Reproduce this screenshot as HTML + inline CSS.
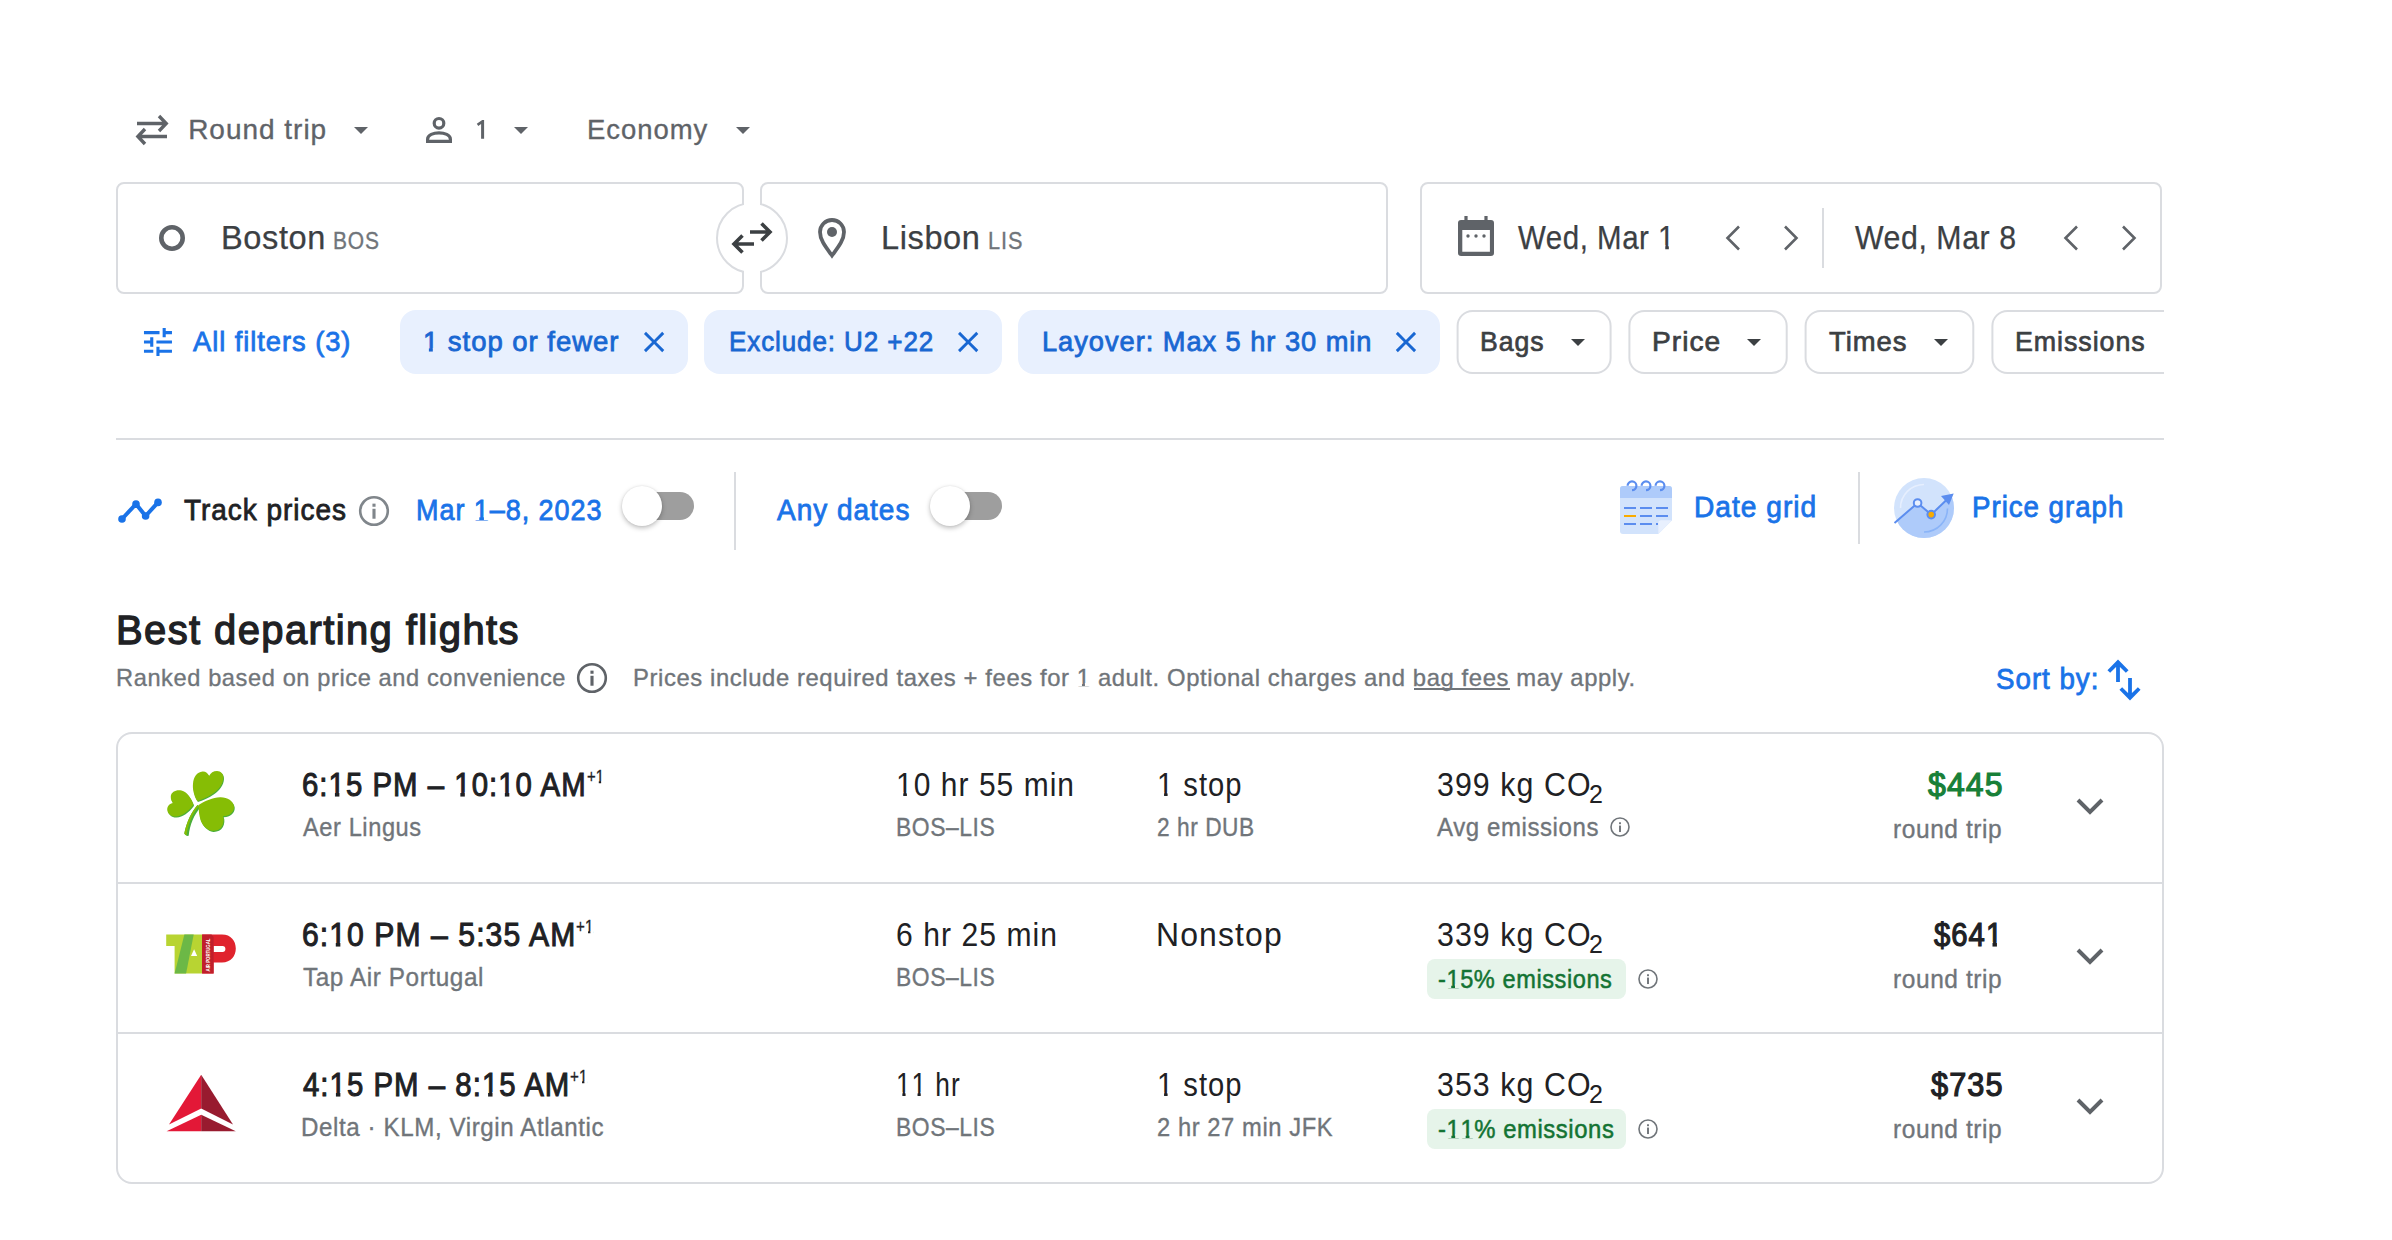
<!DOCTYPE html>
<html><head><meta charset="utf-8"><title>Google Flights</title>
<style>
html,body{margin:0;padding:0;background:#fff;}
body{width:2392px;height:1240px;position:relative;overflow:hidden;font-family:"Liberation Sans",sans-serif;}
.t{position:absolute;white-space:nowrap;transform-origin:0 0;}
.one{position:relative;}
.one::before,.one::after{content:"";position:absolute;top:0.79em;height:0.14em;background:var(--bg);}
.one::before{left:0;width:var(--a);}
.one::after{left:var(--b);width:0.225em;}
svg.ov{position:absolute;left:0;top:0;}
@media (max-width:1300px){html{zoom:0.5;}}
.tog{position:absolute;}
.tog .tr{position:absolute;left:10px;top:6px;width:62px;height:28px;border-radius:14px;background:#9e9e9e;}
.tog .th{position:absolute;left:0;top:0;width:40px;height:40px;border-radius:50%;background:#fff;box-shadow:0 2px 5px rgba(0,0,0,.26),0 0 2px rgba(0,0,0,.08);}
</style></head>
<body>
<svg class="ov" width="2392" height="1240" viewBox="0 0 2392 1240">
<g stroke="#5f6368" stroke-width="3.4" fill="none"><path d="M137 123.5H165M159 116L166.2 123.5L159 131"/><path d="M138.5 136.5H167M145 129L137.9 136.5L145 144"/></g>
<path d="M481.1 119.9H484.1V138.8H481.1V123.9L478.3 125.9L476.8 123.8L482.2 119.9Z" fill="#5f6368"/>
<path d="M354 127H368L361 134Z" fill="#5f6368"/>
<path d="M514 127H528L521 134Z" fill="#5f6368"/>
<path d="M736 127H750L743 134Z" fill="#5f6368"/>
<g stroke="#5f6368" stroke-width="3.2" fill="none"><circle cx="439" cy="123.3" r="4.8"/><path d="M427.6 141.4V139.2C427.6 135 433.5 132.8 439 132.8C444.5 132.8 450.4 135 450.4 139.2V141.4Z"/></g>
<rect x="117" y="183" width="626" height="110" rx="7" fill="#fff" stroke="#dadce0" stroke-width="2"/>
<rect x="761" y="183" width="626" height="110" rx="7" fill="#fff" stroke="#dadce0" stroke-width="2"/>
<circle cx="752" cy="238" r="35" fill="#fff" stroke="#dadce0" stroke-width="2"/>
<rect x="744" y="195" width="16" height="14" fill="#fff"/><rect x="744" y="267" width="16" height="14" fill="#fff"/>
<g stroke="#3c4043" stroke-width="3.6" fill="none"><path d="M750 232H770M761.5 223.5L770 232L761.5 240.5"/><path d="M734 244H754M742.5 235.5L734 244L742.5 252.5"/></g>
<circle cx="172" cy="238" r="10.7" fill="none" stroke="#5f6368" stroke-width="4.6"/>
<path d="M832 255.5C826.5 248 820 240.5 820 232A12 12 0 0 1 844 232C844 240.5 837.5 248 832 255.5Z" fill="none" stroke="#5f6368" stroke-width="3.8"/><circle cx="832" cy="232" r="5" fill="#5f6368"/>
<rect x="1421" y="183" width="740" height="110" rx="7" fill="#fff" stroke="#dadce0" stroke-width="2"/>
<path d="M1461 220H1491A3 3 0 0 1 1494 223V253A3 3 0 0 1 1491 256H1461A3 3 0 0 1 1458 253V223A3 3 0 0 1 1461 220ZM1462.3 230V251.8H1489.9V230Z" fill="#5f6368" fill-rule="evenodd"/><rect x="1464.4" y="216" width="3.2" height="5" fill="#5f6368"/><rect x="1484.4" y="216" width="3.2" height="5" fill="#5f6368"/>
<circle cx="1468" cy="236" r="1.7" fill="#5f6368"/>
<circle cx="1476" cy="236" r="1.7" fill="#5f6368"/>
<circle cx="1484" cy="236" r="1.7" fill="#5f6368"/>
<g stroke="#5f6368" stroke-width="2.6" fill="none"><path d="M1739 226.5L1727.5 238L1739 249.5"/><path d="M1785 226.5L1796.5 238L1785 249.5"/><path d="M2077 226.5L2065.5 238L2077 249.5"/><path d="M2123 226.5L2134.5 238L2123 249.5"/></g>
<rect x="1822" y="208" width="2" height="60" fill="#dadce0"/>
<g fill="#1a73e8" transform="translate(139.3 323.3) scale(1.5556)"><path d="M3 17v2h6v-2H3zM3 5v2h10V5H3zm10 16v-2h8v-2h-8v-2h-2v6h2zM7 9v2H3v2h4v2h2V9H7zm14 4v-2H11v2h10zm-6-4h2V7h4V5h-4V3h-2v6z"/></g>
<rect x="400" y="310" width="288" height="64" rx="16" fill="#e8f0fe"/>
<path d="M19 6.41L17.59 5L12 10.59L6.41 5L5 6.41L10.59 12L5 17.59L6.41 19L12 13.41L17.59 19L19 17.59L13.41 12Z" fill="#1967d2" transform="translate(636.70 324.60) scale(1.45)"/>
<rect x="704" y="310" width="298" height="64" rx="16" fill="#e8f0fe"/>
<path d="M19 6.41L17.59 5L12 10.59L6.41 5L5 6.41L10.59 12L5 17.59L6.41 19L12 13.41L17.59 19L19 17.59L13.41 12Z" fill="#1967d2" transform="translate(950.75 324.60) scale(1.45)"/>
<rect x="1018" y="310" width="422" height="64" rx="16" fill="#e8f0fe"/>
<path d="M19 6.41L17.59 5L12 10.59L6.41 5L5 6.41L10.59 12L5 17.59L6.41 19L12 13.41L17.59 19L19 17.59L13.41 12Z" fill="#1967d2" transform="translate(1388.55 324.60) scale(1.45)"/>
<defs><clipPath id="cl"><rect x="0" y="0" width="2164" height="1240"/></clipPath></defs>
<g clip-path="url(#cl)">
<rect x="1457.6" y="311" width="153.0" height="62" rx="15" fill="#fff" stroke="#dadce0" stroke-width="2"/>
<path d="M1571 339H1585L1578 346Z" fill="#3c4043"/>
<rect x="1629.4" y="311" width="157.29999999999995" height="62" rx="15" fill="#fff" stroke="#dadce0" stroke-width="2"/>
<path d="M1747 339H1761L1754 346Z" fill="#3c4043"/>
<rect x="1805.6" y="311" width="167.70000000000005" height="62" rx="15" fill="#fff" stroke="#dadce0" stroke-width="2"/>
<path d="M1934 339H1948L1941 346Z" fill="#3c4043"/>
<rect x="1992.4" y="311" width="226.5999999999999" height="62" rx="15" fill="#fff" stroke="#dadce0" stroke-width="2"/>
</g>
<rect x="116" y="438" width="2048" height="2" fill="#dadce0"/>
<g stroke="#1a73e8" stroke-width="4" fill="none" stroke-linejoin="round"><path d="M122 519L136 504L145.6 516L158 502.4"/></g>
<circle cx="122" cy="519" r="3.8" fill="#1a73e8"/>
<circle cx="136" cy="504" r="3.8" fill="#1a73e8"/>
<circle cx="145.6" cy="516" r="3.8" fill="#1a73e8"/>
<circle cx="158" cy="502.4" r="3.8" fill="#1a73e8"/>
<circle cx="374" cy="511" r="13.8" fill="none" stroke="#80868b" stroke-width="2.6"/>
<rect x="372.44" y="508.79" width="3.12" height="9.94" fill="#80868b"/><rect x="372.44" y="503.64" width="3.12" height="3.12" fill="#80868b"/>
<rect x="734" y="472" width="2" height="78" fill="#dadce0"/>
<rect x="1858" y="472" width="2" height="72" fill="#dadce0"/>
<g><path d="M1623 486H1669A3 3 0 0 1 1672 489V520.3L1658.3 534H1623A3 3 0 0 1 1620 531V489A3 3 0 0 1 1623 486Z" fill="#d2e3fc"/><path d="M1623 486H1669A3 3 0 0 1 1672 489V498H1620V489A3 3 0 0 1 1623 486Z" fill="#aecbfa"/><path d="M1672 520.3L1658.3 534V523.3A3 3 0 0 1 1661.3 520.3Z" fill="#e8f0fe"/><g stroke="#5b8def" stroke-width="2" fill="none"><path d="M1624 508H1636M1640 508H1652M1656 508H1668M1640 516H1652M1656 516H1668M1624 524H1636M1640 524H1652M1656 524H1658"/><path d="M1627.6 485.8A4.4 4.4 0 1 1 1632 490.2M1641.6 485.8A4.4 4.4 0 1 1 1646 490.2M1655.6 485.8A4.4 4.4 0 1 1 1660 490.2" stroke-width="2.2"/></g><path d="M1624 516H1636" stroke="#f9ab00" stroke-width="2"/></g>
<g><clipPath id="pgc"><circle cx="1924" cy="508" r="30"/></clipPath><circle cx="1924" cy="508" r="30" fill="#d2e3fc"/><path d="M1890 526L1917.6 503L1931.2 514.6L1950 497L1960 490V545H1890Z" fill="#aecbfa" clip-path="url(#pgc)"/><path d="M1900.5 508A23.5 23.5 0 0 1 1924 484.5" stroke="#e8f0fe" stroke-width="1.6" fill="none" opacity=".9"/><path d="M1947.5 508.5A23.5 23.5 0 0 1 1924 532" stroke="#8ab4f8" stroke-width="1.6" fill="none"/><path d="M1894.5 523L1917.6 503L1931.2 514.6L1948 498.5" stroke="#5b8def" stroke-width="2" fill="none"/><path d="M1953.7 493.4L1941 496L1949 505Z" fill="#5b8def"/><circle cx="1917.6" cy="503" r="3.8" fill="#e8f0fe" stroke="#5b8def" stroke-width="2"/><circle cx="1931.2" cy="514.6" r="3.8" fill="#f9ab00" stroke="#5b8def" stroke-width="2"/></g>
<circle cx="592" cy="678" r="13.8" fill="none" stroke="#5f6368" stroke-width="2.6"/>
<rect x="590.44" y="675.79" width="3.12" height="9.94" fill="#5f6368"/><rect x="590.44" y="670.64" width="3.12" height="3.12" fill="#5f6368"/>
<g stroke="#1a73e8" stroke-width="3.8" fill="none"><path d="M2118 682V662.5M2108.8 671.5L2118 662.3L2127.2 671.5"/><path d="M2130 678V697.5M2120.8 688.5L2130 697.7L2139.2 688.5"/></g>
<rect x="117" y="733" width="2046" height="450" rx="15" fill="#fff" stroke="#dadce0" stroke-width="2"/>
<rect x="118" y="882" width="2044" height="2" fill="#dadce0"/><rect x="118" y="1032" width="2044" height="2" fill="#dadce0"/>
<path d="M2078 800L2090 812L2102 800" stroke="#5f6368" stroke-width="4" fill="none" transform="translate(0 0)"/>
<path d="M2078 800L2090 812L2102 800" stroke="#5f6368" stroke-width="4" fill="none" transform="translate(0 150)"/>
<path d="M2078 800L2090 812L2102 800" stroke="#5f6368" stroke-width="4" fill="none" transform="translate(0 300)"/>
<circle cx="1620" cy="827" r="9.0" fill="none" stroke="#70757a" stroke-width="1.6"/>
<rect x="1619.04" y="825.56" width="1.92" height="6.48" fill="#70757a"/><rect x="1619.04" y="822.26" width="1.92" height="1.92" fill="#70757a"/>
<rect x="1427" y="959" width="199" height="40" rx="8" fill="#e6f4ea"/>
<circle cx="1648" cy="979" r="9.0" fill="none" stroke="#70757a" stroke-width="1.6"/>
<rect x="1647.04" y="977.56" width="1.92" height="6.48" fill="#70757a"/><rect x="1647.04" y="974.26" width="1.92" height="1.92" fill="#70757a"/>
<rect x="1427" y="1109" width="199" height="40" rx="8" fill="#e6f4ea"/>
<circle cx="1648" cy="1129" r="9.0" fill="none" stroke="#70757a" stroke-width="1.6"/>
<rect x="1647.04" y="1127.56" width="1.92" height="6.48" fill="#70757a"/><rect x="1647.04" y="1124.26" width="1.92" height="1.92" fill="#70757a"/>
<g>
<path d="M197.5 805C191.5 812 186.5 822 184.3 833.5C185.2 835.5 187.2 836.2 188.7 835.8C189.7 825 194.2 814 201 807Z" fill="#4aae3a"/>
<path d="M197.5 805C191.5 812 186.5 822 184.3 833.5C185 834.5 185.8 835.2 186.6 835.5C187.8 825 192 814 198.8 806.2Z" fill="#86bd05"/>
<path d="M197.2 801C193.5 795 192.5 788 193 783.7C193.5 777 197 772.3 202.5 771.6C205.5 771.3 208 773.5 209 775.9C210.5 773 213.5 771 217 771C221 771 223.5 774 223.3 778C223 784 219 789.5 213 793.5C208 797 202 799.8 197.2 801Z" fill="#4aae3a" transform="translate(0.7 1.1)"/>
<path d="M193.2 804C191 798 187 792 181.5 790.6C176 789.5 171.5 792 170.8 796C170.5 799 171.8 801.8 173 803.1C170 803.5 167.2 806 167.2 809.5C167.5 814 171.5 816.8 176 816.5C182 816 188 812 193.2 805Z" fill="#4aae3a" transform="translate(0.7 1.1)"/>
<path d="M198.6 805C205 801 213 797.5 220 797.3C227 797 233.5 801 234 806.5C234.3 811 231 815 225.5 816L223 816.1C224.2 818.5 223.8 823 222.2 826C220.2 829.5 216.5 831 212.5 830.8C207 830.3 202.5 825.5 200.5 820C199 815 198.6 809 198.6 805Z" fill="#4aae3a" transform="translate(0.7 1.1)"/>
<path d="M197.2 801C193.5 795 192.5 788 193 783.7C193.5 777 197 772.3 202.5 771.6C205.5 771.3 208 773.5 209 775.9C210.5 773 213.5 771 217 771C221 771 223.5 774 223.3 778C223 784 219 789.5 213 793.5C208 797 202 799.8 197.2 801Z" fill="#86bd05"/>
<path d="M193.2 804C191 798 187 792 181.5 790.6C176 789.5 171.5 792 170.8 796C170.5 799 171.8 801.8 173 803.1C170 803.5 167.2 806 167.2 809.5C167.5 814 171.5 816.8 176 816.5C182 816 188 812 193.2 805Z" fill="#86bd05"/>
<path d="M198.6 805C205 801 213 797.5 220 797.3C227 797 233.5 801 234 806.5C234.3 811 231 815 225.5 816L223 816.1C224.2 818.5 223.8 823 222.2 826C220.2 829.5 216.5 831 212.5 830.8C207 830.3 202.5 825.5 200.5 820C199 815 198.6 809 198.6 805Z" fill="#86bd05"/>
</g>
<g><path d="M166.2 934.6H202.1V973.6H174.6V946.1H166.2Z" fill="#b8d432"/><path d="M184.4 934.6H193.7L186.1 973.6H174.6Z" fill="#6cb846"/><path d="M194.1 949.2L197.2 955.9H191Z" fill="#fff"/><path d="M202.1 934.6H222C231 934.6 235.8 941 235.8 948.6C235.8 956 231 962.6 222 962.6H213.6V973.6H202.1Z M213.6 946.1V951.9H222.5A2.9 2.9 0 0 0 222.5 946.1Z" fill="#e0232d" fill-rule="evenodd"/><path d="M202.1 934.6H211.5L213.6 937V973.6H202.1Z" fill="#c01f2b"/><text transform="translate(209.6 971.5) rotate(-90)" font-size="4.6" fill="#fff" font-family="Liberation Sans" font-weight="bold" textLength="33" lengthAdjust="spacingAndGlyphs">AIR PORTUGAL</text></g>
<g><path d="M201.2 1074.8L169 1124.5L201.2 1108.5Z" fill="#e31837"/><path d="M201.2 1074.8L233 1124.5L201.2 1108.5Z" fill="#981b2f"/><path d="M201.2 1114.8L166.6 1131.2H201.2Z" fill="#e31837"/><path d="M201.2 1114.8L235.8 1131.2H201.2Z" fill="#981b2f"/></g>
</svg>
<div class="tog" style="left:622px;top:486px;"><div class="tr"></div><div class="th"></div></div>
<div class="tog" style="left:930px;top:486px;"><div class="tr"></div><div class="th"></div></div>
<span class="t" style="left:188.18px;top:115.50px;font-size:28px;line-height:28px;color:#5f6368;letter-spacing:0.98px;-webkit-text-stroke:0.35px #5f6368;">Round trip</span>
<span class="t" style="left:587.21px;top:115.50px;font-size:28px;line-height:28px;color:#5f6368;transform:scaleX(0.9816);letter-spacing:0.98px;-webkit-text-stroke:0.35px #5f6368;">Economy</span>
<span class="t" style="left:221.16px;top:221.00px;font-size:33px;line-height:33px;color:#3c4043;transform:scaleX(0.9875);letter-spacing:0.6px;-webkit-text-stroke:0.25px #3c4043;">Boston</span>
<span class="t" style="left:333.43px;top:228.50px;font-size:24px;line-height:24px;color:#70757a;transform:scaleX(0.8730);letter-spacing:1.0px;-webkit-text-stroke:0.35px #70757a;">BOS</span>
<span class="t" style="left:881.16px;top:221.00px;font-size:33px;line-height:33px;color:#3c4043;transform:scaleX(0.9868);letter-spacing:0.6px;-webkit-text-stroke:0.25px #3c4043;">Lisbon</span>
<span class="t" style="left:988.37px;top:228.50px;font-size:24px;line-height:24px;color:#70757a;transform:scaleX(0.9043);letter-spacing:1.0px;-webkit-text-stroke:0.35px #70757a;">LIS</span>
<span class="t" style="left:1517.62px;top:221.00px;font-size:33px;line-height:33px;color:#3c4043;transform:scaleX(0.8925);letter-spacing:0.6px;-webkit-text-stroke:0.25px #3c4043;">Wed, Mar <span class="one" style="--bg:#fff;--a:0.228em;--b:0.356em">1</span></span>
<span class="t" style="left:1855.12px;top:221.00px;font-size:33px;line-height:33px;color:#3c4043;transform:scaleX(0.9183);letter-spacing:0.6px;-webkit-text-stroke:0.25px #3c4043;">Wed, Mar 8</span>
<span class="t" style="left:193.40px;top:327.50px;font-size:28px;line-height:28px;color:#1a73e8;transform:scaleX(0.9748);letter-spacing:0.98px;-webkit-text-stroke:0.8px #1a73e8;">All filters (3)</span>
<span class="t" style="left:423.44px;top:327.50px;font-size:28px;line-height:28px;color:#1967d2;transform:scaleX(0.9821);letter-spacing:0.98px;-webkit-text-stroke:0.8px #1967d2;"><span class="one" style="--bg:#e8f0fe;--a:0.218em;--b:0.366em">1</span> stop or fewer</span>
<span class="t" style="left:728.54px;top:327.50px;font-size:28px;line-height:28px;color:#1967d2;transform:scaleX(0.9284);letter-spacing:0.98px;-webkit-text-stroke:0.8px #1967d2;">Exclude: U2 +22</span>
<span class="t" style="left:1041.95px;top:327.50px;font-size:28px;line-height:28px;color:#1967d2;transform:scaleX(0.9736);letter-spacing:0.98px;-webkit-text-stroke:0.8px #1967d2;">Layover: Max 5 hr 30 min</span>
<span class="t" style="left:1480.45px;top:327.50px;font-size:28px;line-height:28px;color:#3c4043;transform:scaleX(0.9509);letter-spacing:0.98px;-webkit-text-stroke:0.7px #3c4043;">Bags</span>
<span class="t" style="left:1652.34px;top:327.50px;font-size:28px;line-height:28px;color:#3c4043;transform:scaleX(1.0059);letter-spacing:0.98px;-webkit-text-stroke:0.7px #3c4043;">Price</span>
<span class="t" style="left:1829.35px;top:327.50px;font-size:28px;line-height:28px;color:#3c4043;transform:scaleX(0.9792);letter-spacing:0.98px;-webkit-text-stroke:0.7px #3c4043;">Times</span>
<span class="t" style="left:2015.03px;top:327.50px;font-size:28px;line-height:28px;color:#3c4043;transform:scaleX(0.9575);letter-spacing:0.98px;-webkit-text-stroke:0.7px #3c4043;">Emissions</span>
<span class="t" style="left:184.44px;top:495.50px;font-size:29px;line-height:29px;color:#202124;transform:scaleX(0.9638);letter-spacing:1.02px;-webkit-text-stroke:0.8px #202124;">Track prices</span>
<span class="t" style="left:415.54px;top:495.50px;font-size:29px;line-height:29px;color:#1a73e8;transform:scaleX(0.9305);letter-spacing:1.02px;-webkit-text-stroke:0.8px #1a73e8;">Mar <span class="one" style="--bg:#fff;--a:0.218em;--b:0.366em">1</span>–8, 2023</span>
<span class="t" style="left:776.80px;top:495.50px;font-size:29px;line-height:29px;color:#1a73e8;transform:scaleX(0.9658);letter-spacing:1.02px;-webkit-text-stroke:0.8px #1a73e8;">Any dates</span>
<span class="t" style="left:1694.46px;top:492.90px;font-size:29px;line-height:29px;color:#1a73e8;transform:scaleX(0.9709);letter-spacing:1.02px;-webkit-text-stroke:0.8px #1a73e8;">Date grid</span>
<span class="t" style="left:1972.49px;top:492.80px;font-size:29px;line-height:29px;color:#1a73e8;transform:scaleX(0.9546);letter-spacing:1.02px;-webkit-text-stroke:0.8px #1a73e8;">Price graph</span>
<span class="t" style="left:115.73px;top:610.10px;font-size:41px;line-height:41px;color:#202124;transform:scaleX(0.9742);letter-spacing:1.44px;-webkit-text-stroke:1.3px #202124;">Best departing flights</span>
<span class="t" style="left:115.91px;top:665.80px;font-size:24px;line-height:24px;color:#70757a;transform:scaleX(0.9845);letter-spacing:0.6px;-webkit-text-stroke:0.35px #70757a;">Ranked based on price and convenience</span>
<span class="t" style="left:633.19px;top:666.10px;font-size:24px;line-height:24px;color:#70757a;transform:scaleX(0.9933);letter-spacing:0.6px;-webkit-text-stroke:0.35px #70757a;">Prices include required taxes + fees for <span class="one" style="--bg:#fff;--a:0.225em;--b:0.359em">1</span> adult. Optional charges and bag fees may apply.</span>
<span class="t" style="left:1996.44px;top:664.50px;font-size:29px;line-height:29px;color:#1a73e8;transform:scaleX(0.9564);letter-spacing:1.02px;-webkit-text-stroke:0.8px #1a73e8;">Sort by:</span>
<span class="t" style="left:301.72px;top:768.00px;font-size:33px;line-height:33px;color:#202124;transform:scaleX(0.8897);letter-spacing:1.16px;-webkit-text-stroke:1.0px #202124;">6:<span class="one" style="--bg:#fff;--a:0.217em;--b:0.367em">1</span>5 PM – <span class="one" style="--bg:#fff;--a:0.217em;--b:0.367em">1</span>0:<span class="one" style="--bg:#fff;--a:0.217em;--b:0.367em">1</span>0 AM</span>
<span class="t" style="left:587.37px;top:767.00px;font-size:19px;line-height:19px;color:#202124;transform:scaleX(0.7850);-webkit-text-stroke:0.3px #202124;">+<span class="one" style="--bg:#fff;--a:0.224em;--b:0.360em">1</span></span>
<span class="t" style="left:302.57px;top:814.50px;font-size:25px;line-height:25px;color:#70757a;transform:scaleX(0.9457);letter-spacing:0.6px;-webkit-text-stroke:0.35px #70757a;">Aer Lingus</span>
<span class="t" style="left:896.19px;top:768.00px;font-size:33px;line-height:33px;color:#202124;transform:scaleX(0.9074);letter-spacing:1.16px;"><span class="one" style="--bg:#fff;--a:0.232em;--b:0.352em">1</span>0 hr 55 min</span>
<span class="t" style="left:896.34px;top:814.50px;font-size:25px;line-height:25px;color:#70757a;transform:scaleX(0.9152);letter-spacing:0.6px;-webkit-text-stroke:0.35px #70757a;">BOS–LIS</span>
<span class="t" style="left:1156.63px;top:768.00px;font-size:33px;line-height:33px;color:#202124;transform:scaleX(0.8836);letter-spacing:1.16px;"><span class="one" style="--bg:#fff;--a:0.232em;--b:0.352em">1</span> stop</span>
<span class="t" style="left:1157.27px;top:814.50px;font-size:25px;line-height:25px;color:#70757a;transform:scaleX(0.9083);letter-spacing:0.6px;-webkit-text-stroke:0.35px #70757a;">2 hr DUB</span>
<span class="t" style="left:1437.08px;top:768.00px;font-size:33px;line-height:33px;color:#202124;transform:scaleX(0.9192);letter-spacing:1.16px;">399 kg CO</span>
<span class="t" style="left:1589.00px;top:781.50px;font-size:25px;line-height:25px;color:#202124;">2</span>
<span class="t" style="left:1437.38px;top:814.50px;font-size:25px;line-height:25px;color:#70757a;transform:scaleX(0.9614);letter-spacing:0.6px;-webkit-text-stroke:0.35px #70757a;">Avg emissions</span>
<span class="t" style="left:1927.60px;top:768.00px;font-size:33px;line-height:33px;color:#188038;transform:scaleX(0.9698);letter-spacing:1.16px;-webkit-text-stroke:1.2px #188038;">$445</span>
<span class="t" style="left:1892.72px;top:816.50px;font-size:25px;line-height:25px;color:#70757a;transform:scaleX(0.9792);letter-spacing:0.6px;-webkit-text-stroke:0.35px #70757a;">round trip</span>
<span class="t" style="left:301.67px;top:918.00px;font-size:33px;line-height:33px;color:#202124;transform:scaleX(0.9132);letter-spacing:1.16px;-webkit-text-stroke:1.0px #202124;">6:<span class="one" style="--bg:#fff;--a:0.217em;--b:0.367em">1</span>0 PM – 5:35 AM</span>
<span class="t" style="left:576.35px;top:917.00px;font-size:19px;line-height:19px;color:#202124;transform:scaleX(0.8000);-webkit-text-stroke:0.3px #202124;">+<span class="one" style="--bg:#fff;--a:0.224em;--b:0.360em">1</span></span>
<span class="t" style="left:302.57px;top:964.50px;font-size:25px;line-height:25px;color:#70757a;transform:scaleX(0.9731);letter-spacing:0.6px;-webkit-text-stroke:0.35px #70757a;">Tap Air Portugal</span>
<span class="t" style="left:896.18px;top:918.00px;font-size:33px;line-height:33px;color:#202124;transform:scaleX(0.9114);letter-spacing:1.16px;">6 hr 25 min</span>
<span class="t" style="left:896.34px;top:964.50px;font-size:25px;line-height:25px;color:#70757a;transform:scaleX(0.9152);letter-spacing:0.6px;-webkit-text-stroke:0.35px #70757a;">BOS–LIS</span>
<span class="t" style="left:1155.50px;top:918.00px;font-size:33px;line-height:33px;color:#202124;transform:scaleX(0.9678);letter-spacing:1.16px;">Nonstop</span>
<span class="t" style="left:1437.08px;top:918.00px;font-size:33px;line-height:33px;color:#202124;transform:scaleX(0.9192);letter-spacing:1.16px;">339 kg CO</span>
<span class="t" style="left:1589.00px;top:931.50px;font-size:25px;line-height:25px;color:#202124;">2</span>
<span class="t" style="left:1438.31px;top:966.50px;font-size:25px;line-height:25px;color:#137333;transform:scaleX(0.9437);letter-spacing:0.6px;-webkit-text-stroke:0.5px #137333;">-<span class="one" style="--bg:#e6f4ea;--a:0.222em;--b:0.362em">1</span>5% emissions</span>
<span class="t" style="left:1933.90px;top:918.00px;font-size:33px;line-height:33px;color:#202124;transform:scaleX(0.8863);letter-spacing:1.16px;-webkit-text-stroke:1.2px #202124;">$64<span class="one" style="--bg:#fff;--a:0.214em;--b:0.370em">1</span></span>
<span class="t" style="left:1892.72px;top:966.50px;font-size:25px;line-height:25px;color:#70757a;transform:scaleX(0.9792);letter-spacing:0.6px;-webkit-text-stroke:0.35px #70757a;">round trip</span>
<span class="t" style="left:302.61px;top:1068.00px;font-size:33px;line-height:33px;color:#202124;transform:scaleX(0.8898);letter-spacing:1.16px;-webkit-text-stroke:1.0px #202124;">4:<span class="one" style="--bg:#fff;--a:0.217em;--b:0.367em">1</span>5 PM – 8:<span class="one" style="--bg:#fff;--a:0.217em;--b:0.367em">1</span>5 AM</span>
<span class="t" style="left:570.35px;top:1067.00px;font-size:19px;line-height:19px;color:#202124;transform:scaleX(0.8000);-webkit-text-stroke:0.3px #202124;">+<span class="one" style="--bg:#fff;--a:0.224em;--b:0.360em">1</span></span>
<span class="t" style="left:300.64px;top:1114.50px;font-size:25px;line-height:25px;color:#70757a;transform:scaleX(0.9663);letter-spacing:0.6px;-webkit-text-stroke:0.35px #70757a;">Delta · KLM, Virgin Atlantic</span>
<span class="t" style="left:896.41px;top:1068.00px;font-size:33px;line-height:33px;color:#202124;transform:scaleX(0.7972);letter-spacing:1.16px;"><span class="one" style="--bg:#fff;--a:0.232em;--b:0.352em">1</span><span class="one" style="--bg:#fff;--a:0.232em;--b:0.352em">1</span> hr</span>
<span class="t" style="left:896.34px;top:1114.50px;font-size:25px;line-height:25px;color:#70757a;transform:scaleX(0.9152);letter-spacing:0.6px;-webkit-text-stroke:0.35px #70757a;">BOS–LIS</span>
<span class="t" style="left:1156.63px;top:1068.00px;font-size:33px;line-height:33px;color:#202124;transform:scaleX(0.8836);letter-spacing:1.16px;"><span class="one" style="--bg:#fff;--a:0.232em;--b:0.352em">1</span> stop</span>
<span class="t" style="left:1157.23px;top:1114.50px;font-size:25px;line-height:25px;color:#70757a;transform:scaleX(0.9496);letter-spacing:0.6px;-webkit-text-stroke:0.35px #70757a;">2 hr 27 min JFK</span>
<span class="t" style="left:1437.08px;top:1068.00px;font-size:33px;line-height:33px;color:#202124;transform:scaleX(0.9192);letter-spacing:1.16px;">353 kg CO</span>
<span class="t" style="left:1589.00px;top:1081.50px;font-size:25px;line-height:25px;color:#202124;">2</span>
<span class="t" style="left:1438.30px;top:1116.50px;font-size:25px;line-height:25px;color:#137333;transform:scaleX(0.9541);letter-spacing:0.6px;-webkit-text-stroke:0.5px #137333;">-<span class="one" style="--bg:#e6f4ea;--a:0.222em;--b:0.362em">1</span><span class="one" style="--bg:#e6f4ea;--a:0.222em;--b:0.362em">1</span>% emissions</span>
<span class="t" style="left:1930.60px;top:1068.00px;font-size:33px;line-height:33px;color:#202124;transform:scaleX(0.9300);letter-spacing:1.16px;-webkit-text-stroke:1.2px #202124;">$735</span>
<span class="t" style="left:1892.72px;top:1116.50px;font-size:25px;line-height:25px;color:#70757a;transform:scaleX(0.9792);letter-spacing:0.6px;-webkit-text-stroke:0.35px #70757a;">round trip</span>
<span class="t" style="left:1414px;top:688px;width:96px;height:2px;background:#70757a;"></span>
</body></html>
